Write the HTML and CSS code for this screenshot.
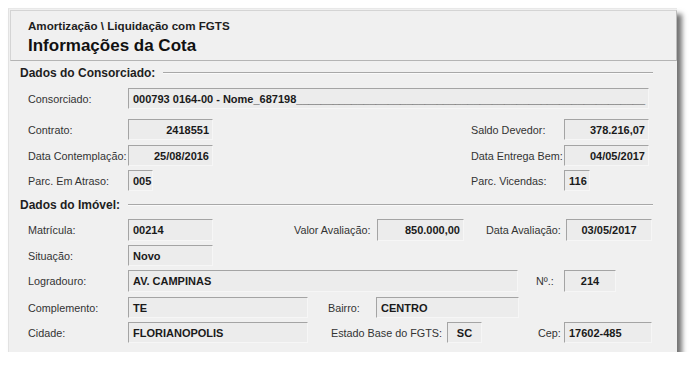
FILE: index.html
```html
<!DOCTYPE html>
<html lang="pt-BR">
<head>
<meta charset="UTF-8" />
<title>Informações da Cota</title>
<link rel="stylesheet" href="styles.css">
</head>
<body>
<div id="win">
  <div id="hdr">
    <div class="crumb">Amortização \ Liquidação com FGTS</div>
    <div class="title">Informações da Cota</div>
  </div>

  <div id="frm">
    <div class="sec">Dados do Consorciado:</div>

    <div class="row r1">
      <span class="lbl">Consorciado:</span>
      <span class="fld w-name">000793 0164-00 - Nome_687198_________________________________________________________</span>
    </div>

    <div class="row r2">
      <div class="left">
        <span class="lbl">Contrato:</span>
        <span class="fld w85 num">2418551</span>
      </div>
      <span class="lbl rlbl">Saldo Devedor:</span>
      <span class="fld w85 num">378.216,07</span>
    </div>

    <div class="row r3">
      <div class="left">
        <span class="lbl">Data Contemplação:</span>
        <span class="fld w85 num">25/08/2016</span>
      </div>
      <span class="lbl rlbl">Data Entrega Bem:</span>
      <span class="fld w85 num">04/05/2017</span>
    </div>

    <div class="row r4">
      <div class="left">
        <span class="lbl">Parc. Em Atraso:</span>
        <span class="fld w25">005</span>
      </div>
      <span class="lbl rlbl">Parc. Vicendas:</span>
      <span class="fld w26">116</span>
    </div>

    <div class="sec s2">Dados do Imóvel:</div>

    <div class="row r5">
      <span class="lbl">Matrícula:</span>
      <span class="fld w85">00214</span>
      <span class="lbl lv">Valor Avaliação:</span>
      <span class="fld w87 num">850.000,00</span>
      <span class="lbl ld">Data Avaliação:</span>
      <span class="fld w86 mid">03/05/2017</span>
    </div>

    <div class="row r6">
      <span class="lbl">Situação:</span>
      <span class="fld w85">Novo</span>
    </div>

    <div class="row r7">
      <span class="lbl">Logradouro:</span>
      <span class="fld w390">AV. CAMPINAS</span>
      <span class="lbl ln">Nº.:</span>
      <span class="fld w52 mid">214</span>
    </div>

    <div class="row r8">
      <span class="lbl">Complemento:</span>
      <span class="fld w180">TE</span>
      <span class="lbl lb">Bairro:</span>
      <span class="fld w143">CENTRO</span>
    </div>

    <div class="row r9">
      <span class="lbl">Cidade:</span>
      <span class="fld w180">FLORIANOPOLIS</span>
      <span class="lbl le">Estado Base do FGTS:</span>
      <span class="fld w35 mid">SC</span>
      <span class="lbl lc">Cep:</span>
      <span class="fld w88">17602-485</span>
    </div>
  </div>
</div>
</body>
</html>
```

FILE: styles.css
```css
* {
  box-sizing: border-box;
}
body {
  margin: 0;
  background: #fff;
  font-family: 'Liberation Sans', Arial, sans-serif;
  color: #333;
}
#win {
  margin: 8px 0 0 8px;
  width: 669px;
  height: 344px;
  background: #f0f0f0;
  border-left: 1px solid #e2e2e2;
  border-top: 1px solid #e8e8e8;
  padding: 1px 0 0 1px;
  box-shadow: 5px 6px 5px rgba(0, 0, 0, 0.55);
}
#hdr {
  height: 51px;
  background: #f0f0f0;
  border: 1px solid #d4d4d4;
  border-right-color: #bcbcbc;
  border-bottom-color: #b4b4b4;
  padding: 8px 0 0 17px;
  color: #1e1e1e;
}
.crumb {
  font-size: 11.6px;
  font-weight: bold;
  line-height: 14px;
}
.title {
  font-size: 17px;
  font-weight: bold;
  line-height: 20px;
  margin-top: 3px;
  color: #111;
}
#frm {
  padding: 5px 24px 0 10px;
}
.sec {
  display: flex;
  align-items: center;
  gap: 8px;
  height: 14px;
  font-size: 12px;
  font-weight: bold;
  color: #1e1e1e;
}
.sec::after {
  content: "";
  flex: 1;
  border-top: 1px solid #a8a8a8;
  border-bottom: 1px solid #fafafa;
}
.s2 { margin-top: 7px; }
.row {
  display: flex;
  align-items: center;
  height: 21px;
  padding-left: 8px;
  font-size: 10.8px;
}
.r1 { margin-top: 8px; }
.r2 { margin-top: 10px; }
.r3 { margin-top: 5px; }
.r4 { margin-top: 4px; }
.r5 { margin-top: 7px; height: 22px; }
.r6 { margin-top: 4px; }
.r7 { margin-top: 4px; height: 22px; }
.r8 { margin-top: 5px; }
.r9 { margin-top: 4px; }
.lbl {
  width: 100px;
  flex: none;
  white-space: nowrap;
}
.left {
  display: flex;
  align-items: center;
  width: 443px;
  height: 100%;
}
.rlbl { width: 93px; }
.lv { margin-left: 81px; width: 83px; }
.ld { margin-left: 22px; width: 80px; }
.ln { margin-left: 18px; width: 28px; }
.lb { margin-left: 20px; width: 48px; }
.le { margin-left: 23px; width: 116px; }
.lc { margin-left: 56px; width: 26px; }
.fld {
  flex: none;
  height: 100%;
  display: flex;
  align-items: center;
  padding: 0 4px;
  background: #ececec;
  border-top: 1px solid #a4a4a4;
  border-left: 1px solid #a4a4a4;
  border-right: 1px solid #f6f6f6;
  border-bottom: 1px solid #f6f6f6;
  font-size: 11px;
  font-weight: bold;
  color: #1a1a1a;
  white-space: nowrap;
  overflow: hidden;
}
.num { justify-content: flex-end; padding-right: 3px; }
.mid { justify-content: center; }
.w-name { width: 521px; padding-right: 3px; }
.w25 { width: 25px; }
.w26 { width: 26px; }
.w35 { width: 35px; }
.w52 { width: 52px; }
.w85 { width: 85px; }
.w86 { width: 86px; }
.w87 { width: 87px; }
.w88 { width: 88px; }
.w143 { width: 143px; }
.w180 { width: 180px; }
.w390 { width: 390px; }
```
